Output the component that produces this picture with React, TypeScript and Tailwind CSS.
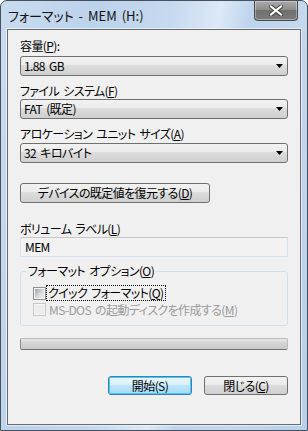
import React from "react";

const U = ({ c }: { c: string }) => <span className="underline underline-offset-[1px]">{c}</span>;

const Arrow = () => (
  <svg width="7" height="4" viewBox="0 0 7 4" className="ml-auto mr-[4px]">
    <polygon points="0,0 7,0 3.5,4" fill="#000" />
  </svg>
);

const Combo = ({ children }: { children: React.ReactNode }) => (
  <div className="flex h-[20px] w-[268px] items-center rounded-[3px] border border-[#707070] bg-[linear-gradient(#f2f2f2_0%,#ebebeb_45%,#dddddd_45%,#cfcfcf_100%)] pl-[3px] leading-none">
    <span>{children}</span>
    <Arrow />
  </div>
);

const Label = ({ children, className = "" }: { children: React.ReactNode; className?: string }) => (
  <div className={"h-[16px] leading-[16px] " + className}>{children}</div>
);

export default function App() {
  return (
    <div className="flex h-[431px] w-[308px] flex-col rounded-t-[7px] border border-[#47505c] bg-[linear-gradient(100deg,#c9dbef_0%,#bcd3ec_25%,#c5d9ef_45%,#dce9f6_58%,#bed4ed_66%,#c4d8ee_80%,#b7cfea_100%)] font-['Noto_Sans_CJK_JP','Noto_Sans',sans-serif] text-[12px] tracking-[-0.6px] text-black [font-feature-settings:'palt'] [word-spacing:2px]">
      <div className="flex h-[28px] items-start justify-between">
        <div className="pl-[7px] pt-[7px] text-[13px] leading-[16px] tracking-[0px] text-[#111]">フォーマット - MEM (H:)</div>
        <div className="mr-[9px] flex h-[20px] w-[44px] items-center justify-center rounded-b-[4px] border border-t-0 border-[#4a4a4a] bg-[linear-gradient(#a9a9a9_0%,#8e8e8e_45%,#707070_50%,#7b7b7b_100%)] shadow-[inset_0_0_0_1px_rgba(255,255,255,0.35)]">
          <svg width="14" height="11" viewBox="0 0 14 11">
            <path d="M2 1.5 L12 9.5 M12 1.5 L2 9.5" stroke="#3a3a3a" strokeWidth="4" strokeLinecap="square" />
            <path d="M2 1.5 L12 9.5 M12 1.5 L2 9.5" stroke="#ffffff" strokeWidth="2.2" strokeLinecap="square" />
          </svg>
        </div>
      </div>
      <div className="mx-[6px] mb-[5px] flex flex-1 flex-col border border-[#6b6b6b] bg-[#f0f0f0] pl-[12px] pt-[8px] shadow-[0_0_0_1px_rgba(255,255,255,0.55)]">
        <Label>容量(<U c="P" />):</Label>
        <div className="mt-[2px]">
          <Combo>1.88 GB</Combo>
        </div>
        <Label className="mt-[7px]">ファイル システム(<U c="F" />)</Label>
        <Combo>FAT (既定)</Combo>
        <Label className="mt-[7px]">アロケーション ユニット サイズ(<U c="A" />)</Label>
        <div className="mt-[1px]">
          <Combo>32 キロバイト</Combo>
        </div>
        <div className="mt-[20px] flex h-[20px] w-[190px] items-center justify-center rounded-[3px] border border-[#707070] bg-[linear-gradient(#f2f2f2_0%,#ebebeb_45%,#dddddd_45%,#cfcfcf_100%)] leading-none">
          デバイスの既定値を復元する(<U c="D" />)
        </div>
        <Label className="mt-[18px]">ボリューム ラベル(<U c="L" />)</Label>
        <div className="flex h-[20px] w-[268px] items-center border border-[#d6e3f1] border-t-[#c6c6c6] bg-[#f2f2f2] pl-[4px] leading-none">
          MEM
        </div>
        <fieldset className="mt-[6px] w-[268px] rounded-[3px] border border-[#cfe0f2] pb-[8px] pl-[12px]">
          <legend className="-ml-[7px] h-[16px] px-[2px] leading-[16px]">
            フォーマット オプション(<U c="O" />)
          </legend>
          <div className="mt-[6px] flex h-[16px] items-center">
            <div className="flex h-[13px] w-[13px] items-center justify-center border border-[#8e8f8f] bg-[#f4f4f4]">
              <div className="h-[9px] w-[9px] bg-[linear-gradient(135deg,#9fa4aa_0%,#d7d9dc_55%,#eeeeee_100%)]" />
            </div>
            <span className="ml-[1px] h-[14px] px-[1px] leading-[13px] outline outline-1 outline-dotted outline-black">
              クイック フォーマット(<U c="Q" />)
            </span>
          </div>
          <div className="flex h-[16px] items-center text-[#9a9a9a]">
            <div className="flex h-[13px] w-[13px] items-center justify-center border border-[#c8c8c8] bg-[#f4f4f4]">
              <div className="h-[9px] w-[9px] bg-[#ededed]" />
            </div>
            <span className="ml-[2px] px-[1px] leading-[13px]">
              MS-DOS の起動ディスクを作成する(<U c="M" />)
            </span>
          </div>
        </fieldset>
        <div className="mt-[12px] h-[12px] w-[268px] rounded-[2px] border border-[#bcbcbc] border-b-[#6f6f6f] border-l-[#8a8a8a] bg-[linear-gradient(#e6e6e6_0%,#d4d4d4_40%,#cbcbcb_100%)]" />
        <div className="mt-[26px] flex w-[268px] justify-end gap-[12px]">
          <div className="flex h-[19px] w-[84px] items-center justify-center rounded-[3px] border border-[#3c7fb1] bg-[linear-gradient(#eaf6fd_0%,#d9f0fc_45%,#bee6fd_50%,#a7d9f5_100%)] leading-none shadow-[inset_0_0_0_1px_#48c8f5]">
            開始(S)
          </div>
          <div className="flex h-[19px] w-[84px] items-center justify-center rounded-[3px] border border-[#707070] bg-[linear-gradient(#f2f2f2_0%,#ebebeb_45%,#dddddd_45%,#cfcfcf_100%)] leading-none">
            閉じる(<U c="C" />)
          </div>
        </div>
      </div>
    </div>
  );
}
